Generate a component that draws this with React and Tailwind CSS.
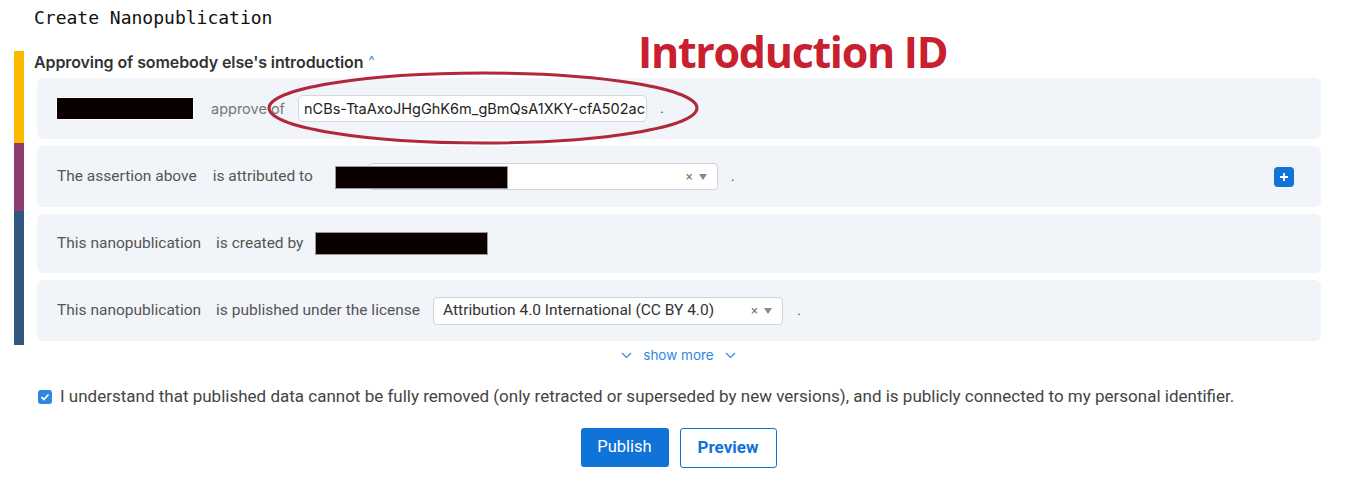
import React from "react";

const inter = { fontFamily: "Inter, 'Noto Sans', sans-serif" };

function Redact({ className = "" }) {
  return <div className={"bg-[#0b0000] border border-[#9a9a9a] " + className} />;
}

function SelectBox({ className = "", children }) {
  return (
    <div className={"flex items-center bg-white border border-[#cfd4da] rounded-[4px] " + className}>
      <div className="flex-1 truncate">{children}</div>
      <div className="flex items-center gap-[6px] pr-[10px] text-[#777]">
        <span className="text-[13px] leading-none">×</span>
        <svg width="8" height="6" viewBox="0 0 8 6"><path d="M0 0h8L4 6z" fill="#888" /></svg>
      </div>
    </div>
  );
}

export default function App() {
  const label = "text-[15.5px] text-[#555] whitespace-nowrap";
  return (
    <div className="relative w-[1357px] h-[497px] bg-white overflow-hidden" style={{ fontFamily: "Roboto, 'Noto Sans', sans-serif" }}>
      <div className="pl-[34px] pt-[5px] h-[51px]">
        <h1 className="text-[18px] text-[#111] leading-[26px]" style={{ fontFamily: "'DejaVu Sans Mono', 'Liberation Mono', monospace" }}>
          Create Nanopublication
        </h1>
      </div>

      <div className="ml-[14px] mr-[36px]">
        {/* group 1 */}
        <div className="border-l-[10px] border-[#fbb900] pb-[4px]">
          <div className="pl-[10px] h-[27px] pt-[2px] flex items-start" style={inter}>
            <span className="text-[16px] leading-[18px] font-semibold text-[#333] tracking-[-0.1px]">Approving of somebody else's introduction</span>
            <span className="ml-[5px] text-[13px] leading-[18px] text-[#2f86e0] relative top-[-2px]">^</span>
          </div>
          <div className="ml-[13px] h-[61px] bg-[#f1f4f8] rounded-[6px] flex items-center pl-[19px]">
            <div className="border border-white">
              <div className="w-[136px] h-[21px] bg-[#0b0000]" />
            </div>
            <span className="ml-[17px] text-[14.5px] text-[#777] whitespace-nowrap" style={inter}>approve of</span>
            <div className="ml-[13px] h-[27px] w-[349px] bg-white border border-[#d4d8dd] rounded-[5px] flex items-center pl-[5px] text-[14.5px] text-[#222] whitespace-nowrap overflow-hidden" style={inter}>
              nCBs-TtaAxoJHgGhK6m_gBmQsA1XKY-cfA502ac
            </div>
            <span className="ml-[13px] text-[15px] text-[#555]">.</span>
          </div>
        </div>

        {/* group 2 */}
        <div className="border-l-[10px] border-[#8e3c70] pt-[3px] pb-[4px]">
          <div className="ml-[13px] h-[61px] bg-[#f1f4f8] rounded-[6px] flex items-center pl-[20px] pr-[27px]">
            <span className={label}>The assertion above</span>
            <span className={"ml-[16px] " + label}>is attributed to</span>
            <div className="relative ml-[22px] h-[27px] flex items-center">
              <SelectBox className="ml-[34px] w-[349px] h-[27px]" />
              <div className="absolute left-[5px] top-[3px] w-[6px] h-[4px] bg-[#7bb37b]" />
              <Redact className="absolute left-0 top-[3px] w-[173px] h-[23px]" />
            </div>
            <span className="ml-[13px] text-[15px] text-[#555]">.</span>
            <div className="ml-auto w-[20px] h-[20px] rounded-[4px] bg-[#0f73d8] flex items-center justify-center">
              <svg width="10" height="10" viewBox="0 0 10 10"><path d="M5 1v8M1 5h8" stroke="white" strokeWidth="1.8" /></svg>
            </div>
          </div>
        </div>

        {/* group 3 */}
        <div className="border-l-[10px] border-[#33587f] pt-[3px] pb-[4px] flex flex-col gap-[7px]">
          <div className="ml-[13px] h-[59px] bg-[#f1f4f8] rounded-[6px] flex items-center pl-[20px]">
            <span className={label}>This nanopublication</span>
            <span className={"ml-[15px] " + label}>is created by</span>
            <Redact className="ml-[12px] w-[173px] h-[23px]" />
          </div>
          <div className="ml-[13px] h-[61px] bg-[#f1f4f8] rounded-[6px] flex items-center pl-[20px]">
            <span className={label}>This nanopublication</span>
            <span className={"ml-[15px] " + label}>is published under the license</span>
            <SelectBox className="ml-[13px] w-[350px] h-[28px]">
              <span className="pl-[9px] text-[15.5px] text-[#333]">Attribution 4.0 International (CC BY 4.0)</span>
            </SelectBox>
            <span className="ml-[14px] text-[15px] text-[#555]">.</span>
          </div>
        </div>
      </div>

      <div className="flex items-center justify-center gap-[11px] mt-[-1px] h-[22px] text-[13.5px] text-[#2f86e0]" style={inter}>
        <svg width="11" height="7" viewBox="0 0 11 7"><path d="M1 1l4.5 4.5L10 1" fill="none" stroke="#2f86e0" strokeWidth="1.2" /></svg>
        <span>show more</span>
        <svg width="11" height="7" viewBox="0 0 11 7"><path d="M1 1l4.5 4.5L10 1" fill="none" stroke="#2f86e0" strokeWidth="1.2" /></svg>
      </div>

      <div className="flex items-center pl-[38px] mt-[20px] h-[22px]">
        <div className="w-[14px] h-[14px] rounded-[3px] bg-[#2f86e0] flex items-center justify-center">
          <svg width="10" height="10" viewBox="0 0 10 10"><path d="M1.5 5.2l2.3 2.3L8.5 2.5" fill="none" stroke="white" strokeWidth="1.8" /></svg>
        </div>
        <span className="ml-[8px] text-[17px] text-[#444] whitespace-nowrap">
          I understand that published data cannot be fully removed (only retracted or superseded by new versions), and is publicly connected to my personal identifier.
        </span>
      </div>

      <div className="flex justify-center gap-[11px] mt-[20px]">
        <button className="w-[88px] h-[39px] rounded-[3px] bg-[#0f73d8] text-white text-[16.5px]">Publish</button>
        <button className="w-[97px] h-[40px] rounded-[3px] bg-white border border-[#0f73d8] text-[#0f73d8] text-[17px] font-bold">Preview</button>
      </div>

      {/* annotation overlay */}
      <div className="absolute left-[638px] top-[30px] text-[43px] font-bold text-[#c8202f] leading-none tracking-[-1.3px]" style={{ fontFamily: "'Open Sans', 'Noto Sans', sans-serif" }}>
        Introduction ID
      </div>
      <svg className="absolute left-0 top-0 pointer-events-none" width="1357" height="497">
        <ellipse cx="483" cy="108" rx="214" ry="35" fill="none" stroke="#b0283a" strokeWidth="3" />
      </svg>
    </div>
  );
}
